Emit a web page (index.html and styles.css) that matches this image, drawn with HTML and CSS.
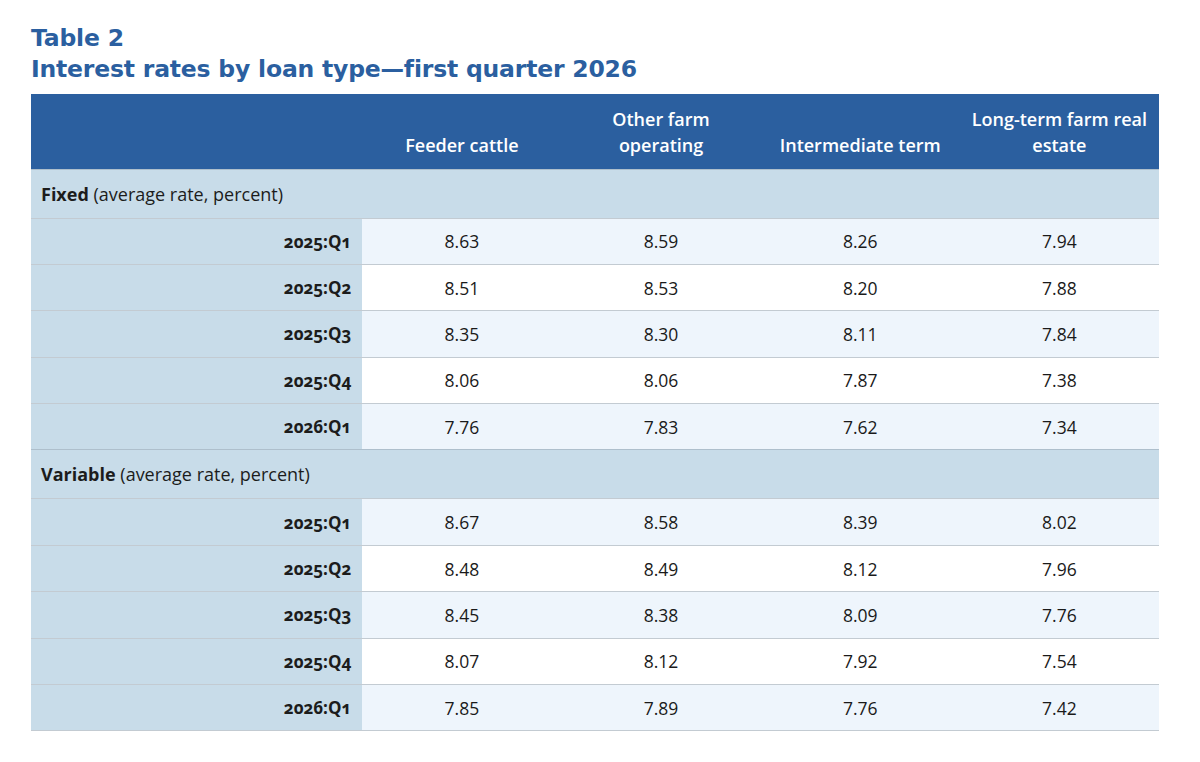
FILE: index.html
```html
<!DOCTYPE html>
<html lang="en">
<head>
<meta charset="utf-8">
<title>Table 2</title>
<link rel="stylesheet" href="styles.css">
</head>
<body>
<main class="page">
  <h1 class="title"><span class="title-line">Table 2</span><span class="title-line">Interest rates by loan type—first quarter 2026</span></h1>
  <table class="rates">
    <thead>
      <tr class="head-row">
        <th class="corner"></th>
        <th>Feeder cattle</th>
        <th>Other farm<br>operating</th>
        <th>Intermediate term</th>
        <th>Long-term farm real<br>estate</th>
      </tr>
    </thead>
    <tbody>
      <tr class="section"><td colspan="5"><b>Fixed</b> (average rate, percent)</td></tr>
      <tr class="odd"><th class="label">2025:Q1</th><td>8.63</td><td>8.59</td><td>8.26</td><td>7.94</td></tr>
      <tr class="even"><th class="label">2025:Q2</th><td>8.51</td><td>8.53</td><td>8.20</td><td>7.88</td></tr>
      <tr class="odd"><th class="label">2025:Q3</th><td>8.35</td><td>8.30</td><td>8.11</td><td>7.84</td></tr>
      <tr class="even"><th class="label">2025:Q4</th><td>8.06</td><td>8.06</td><td>7.87</td><td>7.38</td></tr>
      <tr class="odd"><th class="label">2026:Q1</th><td>7.76</td><td>7.83</td><td>7.62</td><td>7.34</td></tr>
      <tr class="section"><td colspan="5"><b>Variable</b> (average rate, percent)</td></tr>
      <tr class="odd"><th class="label">2025:Q1</th><td>8.67</td><td>8.58</td><td>8.39</td><td>8.02</td></tr>
      <tr class="even"><th class="label">2025:Q2</th><td>8.48</td><td>8.49</td><td>8.12</td><td>7.96</td></tr>
      <tr class="odd"><th class="label">2025:Q3</th><td>8.45</td><td>8.38</td><td>8.09</td><td>7.76</td></tr>
      <tr class="even"><th class="label">2025:Q4</th><td>8.07</td><td>8.12</td><td>7.92</td><td>7.54</td></tr>
      <tr class="odd"><th class="label">2026:Q1</th><td>7.85</td><td>7.89</td><td>7.76</td><td>7.42</td></tr>
    </tbody>
  </table>
</main>
</body>
</html>
```

FILE: styles.css
```css
html, body {
  margin: 0;
  padding: 0;
  background: #ffffff;
}

body {
  font-family: "Open Sans", "Liberation Sans", sans-serif;
  color: #1a1a1a;
}

.page {
  padding: 23px 41px 0 31px;
}

.title {
  margin: 0 0 9px 0;
  font-family: "DejaVu Sans", "Open Sans", sans-serif;
  font-weight: 700;
  font-size: 23.5px;
  line-height: 31px;
  color: #2b5fa0;
  letter-spacing: -0.2px;
}

.title-line {
  display: block;
}

.rates {
  width: 1128px;
  border-collapse: collapse;
  table-layout: fixed;
  font-size: 17.5px;
}

.rates th,
.rates td {
  padding: 0;
}

.head-row {
  height: 75px;
  background: #2b5f9f;
}

.head-row th {
  color: #ffffff;
  font-weight: 600;
  font-size: 18px;
  line-height: 26px;
  text-align: center;
  vertical-align: bottom;
  padding-bottom: 11px;
  width: 199px;
}

.head-row th.corner {
  width: 331px;
}

.section {
  height: 49px;
  background: #c8dce9;
  border-top: 1px solid #aebfcc;
}

.rates .section td {
  text-align: left;
  padding-left: 10px;
  font-size: 18px;
  color: #1c1c1c;
}

.section b {
  font-weight: 700;
}

.odd, .even {
  height: 46.4px;
  border-top: 1px solid #c3cbd2;
}

.odd td {
  background: #eef5fc;
}

.even td {
  background: #ffffff;
}

.rates td {
  text-align: center;
  color: #1a1a1a;
}

.rates tbody tr:last-child {
  border-bottom: 1px solid #c3cbd2;
}

.label {
  background: #c8dce9;
  text-align: right;
  font-weight: 700;
  font-size: 17px;
  padding-right: 11px !important;
  color: #1c1c1c;
  font-variant-numeric: oldstyle-nums;
  font-feature-settings: "onum" 1;
}
```
